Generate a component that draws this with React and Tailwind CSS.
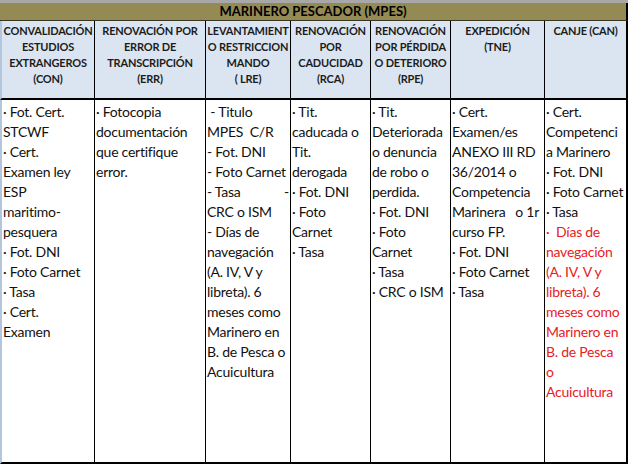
const FONT = { fontFamily: 'Lato, "Open Sans", "Liberation Sans", sans-serif' };

const columns = [
  {
    w: 'w-[93px]',
    head: ['CONVALIDACIÓN', 'ESTUDIOS', 'EXTRANGEROS', '(CON)'],
    body: ['· Fot. Cert.', 'STCWF', '· Cert.', 'Examen ley', 'ESP', 'maritimo-', 'pesquera', '· Fot. DNI', '· Foto Carnet', '· Tasa', '· Cert.', 'Examen'],
  },
  {
    w: 'w-[111px]',
    head: ['RENOVACIÓN POR', 'ERROR DE', 'TRANSCRIPCIÓN', '(ERR)'],
    body: ['· Fotocopia', 'documentación', 'que certifique', 'error.'],
  },
  {
    w: 'w-[85px]',
    head: ['LEVANTAMIENT', 'O RESTRICCION', 'MANDO', '( LRE)'],
    body: [' - Titulo', 'MPES  C/R', '- Fot. DNI', '- Foto Carnet', ['- Tasa', '-'], 'CRC o ISM', '- Días de', 'navegación', '(A. IV, V y', 'libreta). 6', 'meses como', 'Marinero en', 'B. de Pesca o', 'Acuicultura'],
  },
  {
    w: 'w-[80px]',
    head: ['RENOVACIÓN', 'POR', 'CADUCIDAD', '(RCA)'],
    body: ['· Tit.', 'caducada o', 'Tit.', 'derogada', '· Fot. DNI', '· Foto', 'Carnet', '· Tasa'],
  },
  {
    w: 'w-[80px]',
    head: ['RENOVACIÓN', 'POR PÉRDIDA', 'O DETERIORO', '(RPE)'],
    body: ['· Tit.', 'Deteriorada', 'o denuncia', 'de robo o', 'perdida.', '· Fot. DNI', '· Foto', 'Carnet', '· Tasa', '· CRC o ISM'],
  },
  {
    w: 'w-[94px]',
    head: ['EXPEDICIÓN', '(TNE)'],
    body: ['· Cert.', 'Examen/es', 'ANEXO III RD', '36/2014 o', 'Competencia', 'Marinera   o 1r', 'curso FP.', '· Fot. DNI', '· Foto Carnet', '· Tasa'],
  },
  {
    w: 'w-[83px]',
    head: ['CANJE (CAN)'],
    body: ['· Cert.', 'Competenci', 'a Marinero', '· Fot. DNI', '· Foto Carnet', '· Tasa'],
    red: ['·  Días de', 'navegación', '(A. IV, V y', 'libreta). 6', 'meses como', 'Marinero en', 'B. de Pesca', 'o', 'Acuicultura'],
  },
];

function Line({ text }) {
  if (Array.isArray(text)) {
    return (
      <div className="flex justify-between whitespace-pre pr-[1px]">
        <span>{text[0]}</span>
        <span>{text[1]}</span>
      </div>
    );
  }
  return <div className="whitespace-pre">{text}</div>;
}

export default function App() {
  return (
    <div className="w-[628px] h-[466px] bg-white overflow-hidden text-[#111]" style={FONT}>
      <div className="h-[3px] bg-[#a8a8a8]" />
      <div className="h-[18px] bg-[#948a54] border-b border-[#3a3520] border-r-2 border-r-black flex items-center justify-center text-[13px] font-bold text-black">
        MARINERO PESCADOR (MPES)
      </div>
      <div className="flex h-[79px] bg-[#dbe5f1] border-b-2 border-black border-l-2 border-l-[#b4c6dc]">
        {columns.map((c, i) => (
          <div
            key={i}
            className={`${c.w} shrink-0 pt-[2px] text-center text-[11px] leading-[16px] font-bold text-[#1c1c1c] tracking-[-0.2px] ${i === columns.length - 1 ? 'border-r-2' : 'border-r'} border-black`}
          >
            {c.head.map((h, j) => (
              <div key={j} className="whitespace-nowrap">{h}</div>
            ))}
          </div>
        ))}
      </div>
      <div className="flex h-[364px] border-b-2 border-black border-l-2 border-l-[#b4c6dc]">
        {columns.map((c, i) => (
          <div
            key={i}
            className={`${c.w} shrink-0 pt-[2px] pl-[1px] text-[14px] leading-[20px] tracking-[-0.25px] overflow-hidden ${i === columns.length - 1 ? 'border-r-2' : 'border-r'} border-black`}
          >
            {c.body.map((t, j) => (
              <Line key={j} text={t} />
            ))}
            {c.red && (
              <div className="text-[#e8201e]">
                {c.red.map((t, j) => (
                  <Line key={j} text={t} />
                ))}
              </div>
            )}
          </div>
        ))}
      </div>
    </div>
  );
}
